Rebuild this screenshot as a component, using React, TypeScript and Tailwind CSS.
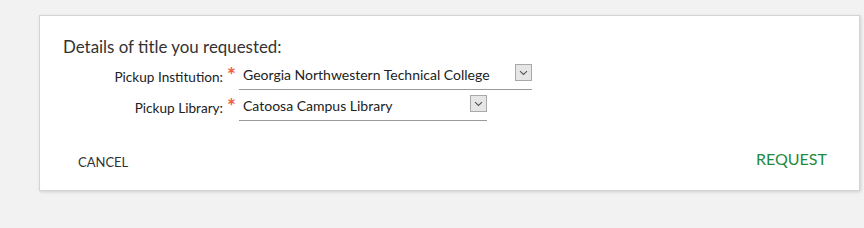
import React from "react";

function Chevron() {
  return (
    <div className="w-[17px] h-[17px] border border-[#a9a9a9] bg-[#e6e6e6] flex items-center justify-center">
      <svg width="9" height="6" viewBox="0 0 9 6" fill="none">
        <path d="M1 1.2 L4.5 4.5 L8 1.2" stroke="#555" strokeWidth="1.1" />
      </svg>
    </div>
  );
}

function Row({ label, value, width }: { label: string; value: string; width: string }) {
  return (
    <div className="flex items-start h-[31px]">
      <div className="w-[183px] text-right text-[13.6px] text-[#222] pt-[5px] leading-[18px]">{label}</div>
      <div className="w-[16px] text-[#f05a3f] text-[21px] font-bold leading-[18px] pt-[3px] pl-[4px]">*</div>
      <div className={`${width} border-b border-[#9a9a9a] h-[27px] flex items-start justify-between`}>
        <span className="pl-[4px] text-[14px] text-[#222] leading-[18px] pt-[3px]">{value}</span>
        <div className="pt-[1px]">
          <Chevron />
        </div>
      </div>
    </div>
  );
}

export default function App() {
  return (
    <div className="w-[864px] h-[228px] bg-[#f2f2f2] pt-[15px] pl-[39px]" style={{ fontFamily: "Lato, 'Open Sans', sans-serif" }}>
      <div className="w-[821px] h-[176px] bg-white border border-[#d4d4d4] shadow-[1px_1px_3px_rgba(0,0,0,0.15)] flex flex-col">
        <div className="pl-[23px] pt-[21px] text-[16.9px] leading-[20px] text-[#333]">Details of title you requested:</div>
        <div className="pt-[6px]">
          <Row label="Pickup Institution:" value="Georgia Northwestern Technical College" width="w-[293px]" />
          <Row label="Pickup Library:" value="Catoosa Campus Library" width="w-[248px]" />
        </div>
        <div className="flex justify-between items-start pl-[38px] pr-[32px] pt-[24px]">
          <span className="text-[13px] text-[#333] leading-[20px] pt-[3px]">CANCEL</span>
          <span className="text-[16px] text-[#1f8a3c] leading-[20px]">REQUEST</span>
        </div>
      </div>
    </div>
  );
}
